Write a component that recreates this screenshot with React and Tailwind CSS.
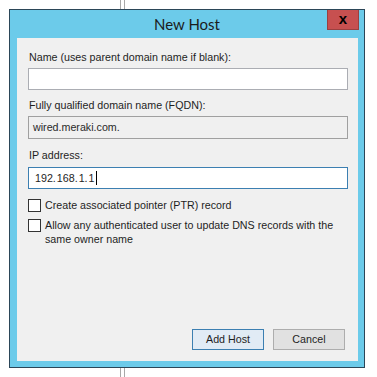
import React from 'react';

const font = { fontFamily: '"Liberation Sans", Arial, sans-serif' };

const Checkbox = ({ children }) => (
  <div className="flex items-start gap-[4px]">
    <div className="w-[13px] h-[13px] mt-[1px] shrink-0 border border-[#333333] bg-white" />
    <div className="leading-[14px] whitespace-nowrap">{children}</div>
  </div>
);

const App = () => {
  return (
    <div className="w-[377px] h-[377px] bg-white overflow-hidden text-[10.7px] text-[#1e1e1e]" style={font}>
      {/* background splitter line above */}
      <div className="h-[9px] pl-[120px]">
        <div className="w-[5px] h-full border-x border-[#a8a8a8] bg-white" />
      </div>

      {/* window */}
      <div className="ml-[9px] w-[356px] h-[359px] border border-[#2b4658] bg-[#6ccbea] flex flex-col">
        {/* title bar */}
        <div className="relative h-[28px] flex items-center justify-center">
          <span className="text-[15px] text-[#1b1b1b] mt-[1px]" style={{ fontFamily: 'Lato, sans-serif' }}>New Host</span>
          <div className="absolute right-[5px] top-0 w-[32px] h-[20px] bg-[#c75050] border-x border-b border-[#9a4040] flex items-center justify-center">
            <span className="font-bold text-[15px] leading-none text-black -mt-[2px]">x</span>
          </div>
        </div>

        {/* client area */}
        <div className="ml-[7px] mr-[6px] mb-[6px] flex-1 bg-[#f0f0f0] px-[11px] pt-[11px] flex flex-col">
          <div className="leading-[16px] pl-[1px]">Name (uses parent domain name if blank):</div>
          <div className="mt-[3px] w-[320px] h-[22px] bg-white border border-[#abadb3]" />

          <div className="mt-[7px] leading-[16px] pl-[1px]">Fully qualified domain name (FQDN):</div>
          <div className="mt-[3px] w-[320px] h-[23px] bg-[#f0f0f0] border border-[#a0a0a0] flex items-center px-[4px] text-[#2a2a2a]">
            wired.meraki.com.
          </div>

          <div className="mt-[8px] leading-[16px] pl-[1px]">IP address:</div>
          <div className="mt-[4px] w-[320px] h-[22px] bg-white border border-[#3c7fb1] flex items-center pl-[6px]">
            <span className="flex items-center">
              <span>192</span><span className="mr-[1px]">.</span>
              <span>168</span><span className="mr-[1px]">.</span>
              <span>1</span><span className="mr-[1px]">.</span>
              <span>1</span>
            </span>
            <span className="w-px h-[14px] bg-black ml-[1px]" />
          </div>

          <div className="mt-[9px] flex flex-col gap-[6px]">
            <Checkbox>Create associated pointer (PTR) record</Checkbox>
            <Checkbox>
              Allow any authenticated user to update DNS records with the
              <br />
              same owner name
            </Checkbox>
          </div>

          <div className="mt-auto mb-[11px] flex justify-end gap-[9px] pr-[2px]">
            <button className="w-[72px] h-[21px] bg-[#e1ebf5] border border-[#3c7fb1] leading-none">Add Host</button>
            <button className="w-[72px] h-[21px] bg-[#e1e1e1] border border-[#adadad] leading-none">Cancel</button>
          </div>
        </div>
      </div>

      {/* background splitter line below */}
      <div className="h-[9px] pl-[120px]">
        <div className="w-[5px] h-full border-x border-[#a8a8a8] bg-white" />
      </div>
    </div>
  );
};

export default App;
